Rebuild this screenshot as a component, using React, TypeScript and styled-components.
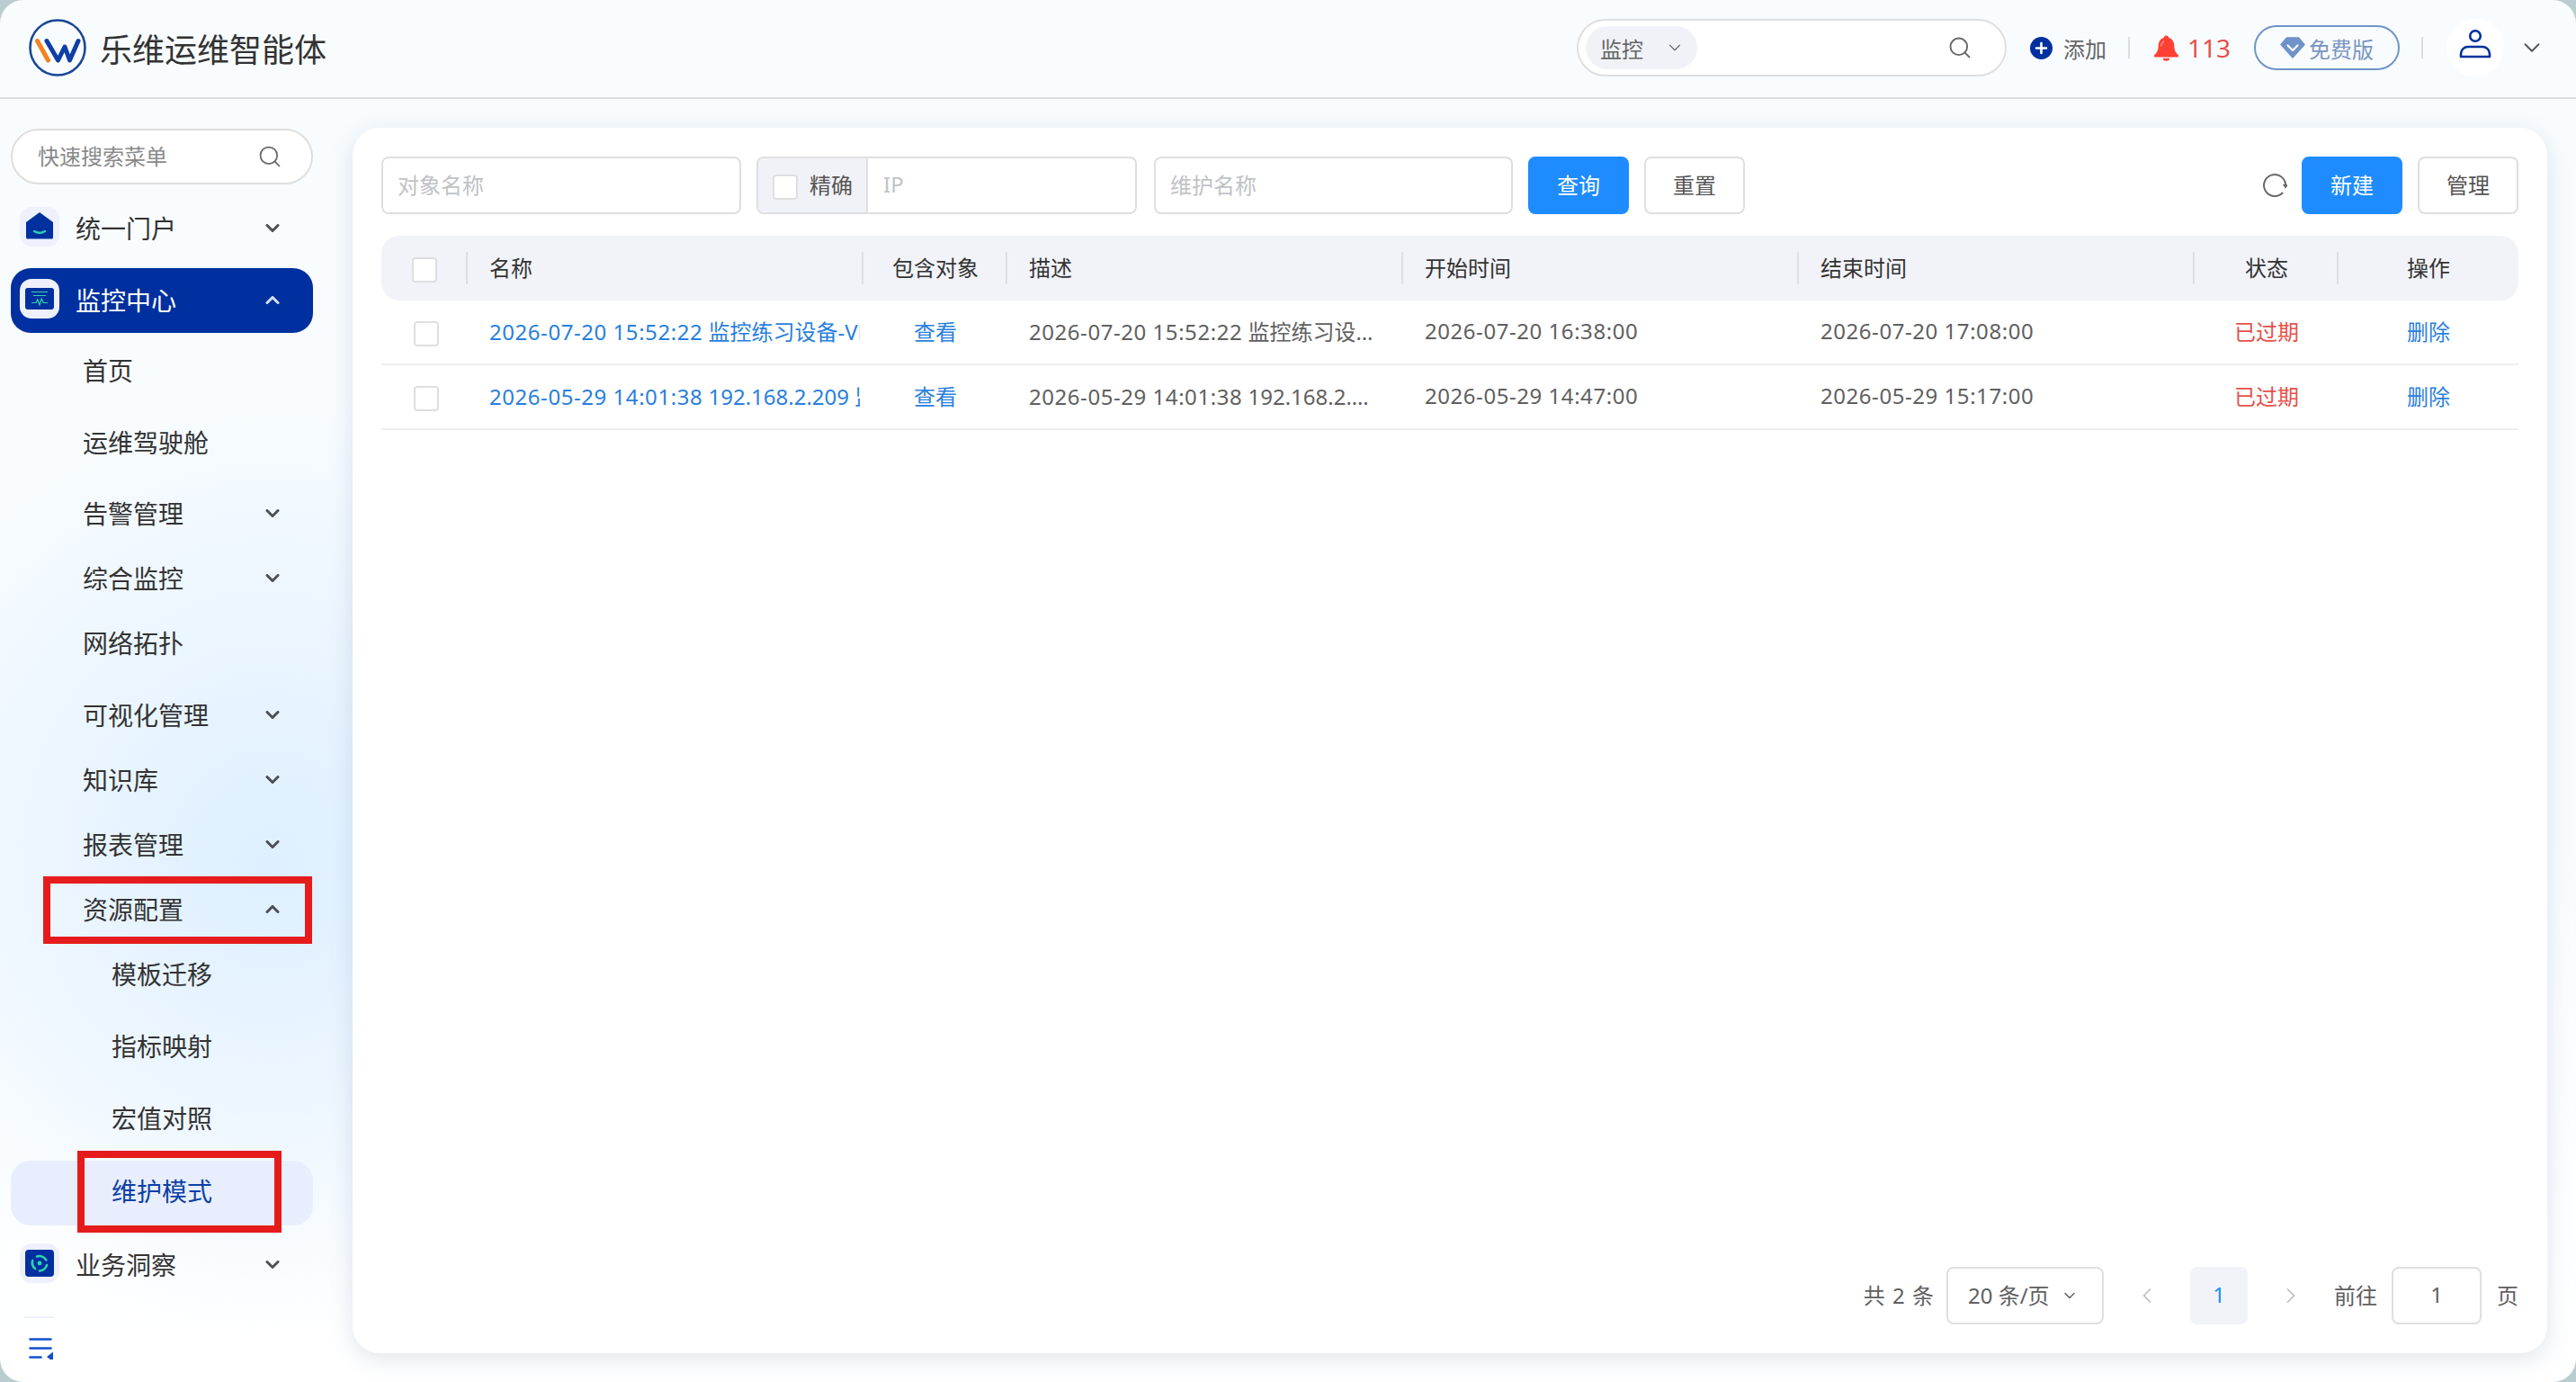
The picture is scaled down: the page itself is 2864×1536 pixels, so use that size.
import { FC, ReactNode } from 'react';
import styled, { createGlobalStyle } from 'styled-components';
import { ChevronDown, ChevronLeft, ChevronRight, Search } from 'lucide-react';

const NAVY = '#00309f';
const TEAL = '#2fd3b0';
const BLUE = '#1e8cff';

const GlobalStyle = createGlobalStyle`
  html, body {
    margin: 0;
    padding: 0;
    background: #b9cdd0;
  }
  * {
    box-sizing: border-box;
  }
  body {
    font-family: 'Noto Sans', 'Noto Sans CJK SC', sans-serif;
    font-size: 24px;
    color: #333;
  }
`;

const PortalIcon = () => (
  <svg width="44" height="44" viewBox="0 0 44 44">
    <path d="M7 17 22 6l15 11v17a1.500 1.500 0 0 1-1.500 1.500h-27A1.500 1.500 0 0 1 7 34z" fill={NAVY} />
    <path d="M16 27q6 3.500 12 0" fill="none" stroke={TEAL} strokeWidth="2.400" strokeLinecap="round" />
  </svg>
);

const MonitorIcon = () => (
  <svg width="44" height="44" viewBox="0 0 44 44">
    <rect x="6" y="10" width="32" height="24" rx="3" fill={NAVY} />
    <path d="M13 14.500h18M15 18.500h14" stroke={TEAL} strokeWidth="1.200" />
    <path d="M13 26.500h5l1.800-3.500 2.200 6 2.200-7 2 4.500h5" fill="none" stroke={TEAL} strokeWidth="1.200" />
  </svg>
);

const InsightIcon = () => (
  <svg width="44" height="44" viewBox="0 0 44 44">
    <rect x="6" y="7" width="32" height="30" rx="4" fill={NAVY} />
    <circle cx="22" cy="22" r="2.400" fill={TEAL} />
    <path
      d="M17 28a8.500 8.500 0 0 1-2.800-9M19 14.500a8.500 8.500 0 0 1 10.300 4M30 24a8.500 8.500 0 0 1-8 6.500"
      fill="none"
      stroke={TEAL}
      strokeWidth="2.600"
      strokeLinecap="round"
    />
  </svg>
);

const RefreshIcon = () => (
  <svg width="28" height="28" viewBox="0 0 28 28">
    <path d="M22.500 22.500A12 12 0 1 1 26 13" fill="none" stroke="#666" strokeWidth="2" strokeLinecap="round" />
    <path d="M22.800 13h6.400L26 17.500z" fill="#666" />
  </svg>
);

interface IMenuItem {
  label: string;
  level: 1 | 2 | 3;
  icon?: ReactNode;
  arrow?: 'up' | 'down';
  active?: boolean;
  selected?: boolean;
  mark?: 'section' | 'leaf';
  after?: number;
}

const menu: IMenuItem[] = [
  { label: '统一门户', level: 1, icon: <PortalIcon />, arrow: 'down', after: 8 },
  { label: '监控中心', level: 1, icon: <MonitorIcon />, arrow: 'up', active: true, after: 6 },
  { label: '首页', level: 2, after: 8 },
  { label: '运维驾驶舱', level: 2, after: 7 },
  { label: '告警管理', level: 2, arrow: 'down' },
  { label: '综合监控', level: 2, arrow: 'down' },
  { label: '网络拓扑', level: 2, after: 8 },
  { label: '可视化管理', level: 2, arrow: 'down' },
  { label: '知识库', level: 2, arrow: 'down' },
  { label: '报表管理', level: 2, arrow: 'down' },
  { label: '资源配置', level: 2, arrow: 'up', mark: 'section' },
  { label: '模板迁移', level: 3, after: 8 },
  { label: '指标映射', level: 3, after: 8 },
  { label: '宏值对照', level: 3, after: 11 },
  { label: '维护模式', level: 3, selected: true, mark: 'leaf', after: 8 },
  { label: '业务洞察', level: 1, icon: <InsightIcon />, arrow: 'down' },
];

const records = [
  {
    stamp: '2026-07-20 15:52:22',
    title: ' 监控练习设备-VMware',
    start: '2026-07-20 16:38:00',
    end: '2026-07-20 17:08:00',
  },
  {
    stamp: '2026-05-29 14:01:38',
    title: ' 192.168.2.209 监控练习设备',
    start: '2026-05-29 14:47:00',
    end: '2026-05-29 15:17:00',
  },
];

const Caret: FC<{ dir: 'up' | 'down' }> = ({ dir }) => (
  <svg width="16" height="11" viewBox="0 0 16 11">
    <path
      d={dir === 'down' ? 'M2 2.500 8 8.500l6-6' : 'M2 8.500 8 2.500l6 6'}
      fill="none"
      stroke="currentColor"
      strokeWidth="3"
      strokeLinecap="round"
      strokeLinejoin="round"
    />
  </svg>
);

const App = () => {
  return (
    <>
      <GlobalStyle />
      <Frame>
        <Header>
          <Logo viewBox="0 0 64 64" width="64" height="64">
            <circle cx="32" cy="32" r="30.500" fill="none" stroke="#1b4694" strokeWidth="2.600" />
            <path d="M9.500 24.500 21.500 46" fill="none" stroke="#f58220" strokeWidth="5" strokeLinecap="round" />
            <path
              d="M20 24.500 32.500 46 40 31l5.500 15L55 24.500"
              fill="none"
              stroke="#0d3fa6"
              strokeWidth="5"
              strokeLinecap="round"
              strokeLinejoin="round"
            />
          </Logo>
          <BrandName>乐维运维智能体</BrandName>

          <GlobalSearch>
            <ScopeSelect>
              监控
              <ChevronDown size={22} strokeWidth={1.2} />
            </ScopeSelect>
            <Search size={28} strokeWidth={1.6} color="#666" />
          </GlobalSearch>

          <AddLink>
            <svg width="25" height="25" viewBox="0 0 25 25">
              <circle cx="12.500" cy="12.500" r="12.500" fill={NAVY} />
              <path d="M12.500 7v11M7 12.500h11" stroke="#fff" strokeWidth="2.600" strokeLinecap="round" />
            </svg>
            添加
          </AddLink>
          <HeadDivider />
          <AlarmCount>
            <svg width="29" height="29" viewBox="0 0 29 29">
              <path
                d="M14.500 0.500c1.600 0 2.600 1 2.800 2.400 4.200 1.200 6 4.800 6 9.100 0 4.400 1.400 7.400 4.300 9.900 1 .9.500 2.600-1 2.600H2.400c-1.500 0-2-1.700-1-2.600 2.900-2.500 4.300-5.500 4.300-9.900 0-4.300 1.800-7.900 6-9.100.2-1.400 1.200-2.400 2.800-2.400z"
                fill="#ff4033"
              />
              <path d="M10.800 25.800h7.400a3.700 3 0 0 1-7.400 0z" fill="#ff4033" />
              <path d="M8.800 12c.2-2.400 1.200-4 3-4.900" fill="none" stroke="#ff8f86" strokeWidth="1.400" strokeLinecap="round" />
            </svg>
            113
          </AlarmCount>
          <PlanBadge>
            <svg width="28" height="24" viewBox="0 0 28 24">
              <path d="M7.500 1h13L27 8.500 14 23 1 8.500z" fill="#6f93c9" stroke="#6f93c9" strokeWidth="1.500" strokeLinejoin="round" />
              <path d="M8.500 9.500 14 15l5.500-5.500" fill="none" stroke="#fff" strokeWidth="2.200" strokeLinecap="round" strokeLinejoin="round" />
            </svg>
            免费版
          </PlanBadge>
          <HeadDivider />
          <Avatar>
            <svg width="36" height="32" viewBox="0 0 36 32">
              <circle cx="18" cy="7" r="5.800" fill="none" stroke={NAVY} strokeWidth="2.600" />
              <path d="M2 30v-3c0-5 4-8 8-8h16c4 0 8 3 8 8v3z" fill="none" stroke={NAVY} strokeWidth="2.600" strokeLinejoin="round" />
            </svg>
          </Avatar>
          <UserCaret>
            <ChevronDown size={30} strokeWidth={1.5} />
          </UserCaret>
        </Header>

        <Body>
          <Sidebar>
            <MenuSearch>
              <span>快速搜索菜单</span>
              <Search size={28} strokeWidth={1.5} color="#666" />
            </MenuSearch>
            <Menu>
              {menu.map((item) => (
                <MenuRow
                  key={item.label}
                  $level={item.level}
                  $active={item.active}
                  $selected={item.selected}
                  $after={item.after ?? 0}
                >
                  {item.icon && <IconTile>{item.icon}</IconTile>}
                  {item.label}
                  {item.arrow && (
                    <RowCaret>
                      <Caret dir={item.arrow} />
                    </RowCaret>
                  )}
                  {item.mark === 'section' && <SectionMark />}
                  {item.mark === 'leaf' && <LeafMark />}
                </MenuRow>
              ))}
            </Menu>
            <SideFooter>
              <svg width="28" height="24" viewBox="0 0 28 24">
                <path d="M1.500 1.500h23M1.500 11.500h23M1.500 21.500h12" stroke="#1050cc" strokeWidth="2.600" strokeLinecap="round" />
                <path d="M27 16v11l-7-5.500z" fill="#1050cc" transform="translate(0 -0.500)" />
              </svg>
            </SideFooter>
          </Sidebar>

          <Card>
            <Toolbar>
              <TextField $width={400}>对象名称</TextField>
              <IpField>
                <ExactToggle>
                  <Tick />
                  精确
                </ExactToggle>
                <IpInput>IP</IpInput>
              </IpField>
              <TextField $width={399} $shift={2}>
                维护名称
              </TextField>
              <ActionButton $primary>查询</ActionButton>
              <ActionButton>重置</ActionButton>
              <ToolbarRight>
                <RefreshIcon />
                <ActionButton $primary>新建</ActionButton>
                <ActionButton>管理</ActionButton>
              </ToolbarRight>
            </Toolbar>

            <TableHead>
              <HeadCell $center>
                <Tick />
              </HeadCell>
              <HeadCell>名称</HeadCell>
              <HeadCell $center>包含对象</HeadCell>
              <HeadCell>描述</HeadCell>
              <HeadCell>开始时间</HeadCell>
              <HeadCell>结束时间</HeadCell>
              <HeadCell $center>状态</HeadCell>
              <HeadCell $center $last>
                操作
              </HeadCell>
            </TableHead>

            {records.map((r) => (
              <TableRow key={r.stamp}>
                <BodyCell $center>
                  <RowTick />
                </BodyCell>
                <BodyCell>
                  <NameClip>
                    <Stamp>{r.stamp}</Stamp>
                    {r.title}
                  </NameClip>
                </BodyCell>
                <BodyCell $center>
                  <LinkText>查看</LinkText>
                </BodyCell>
                <BodyCell>
                  <Clamp>
                    <Stamp>{r.stamp}</Stamp>
                    {r.title}
                  </Clamp>
                </BodyCell>
                <BodyCell>
                  <Stamp>{r.start}</Stamp>
                </BodyCell>
                <BodyCell>
                  <Stamp>{r.end}</Stamp>
                </BodyCell>
                <BodyCell $center>
                  <Expired>已过期</Expired>
                </BodyCell>
                <BodyCell $center>
                  <LinkText>删除</LinkText>
                </BodyCell>
              </TableRow>
            ))}

            <Pager>
              <PagerText>共 2 条</PagerText>
              <PageSize>
                <span>20 条/页</span>
                <ChevronDown size={20} strokeWidth={1.8} />
              </PageSize>
              <PagerArrow>
                <ChevronLeft size={28} strokeWidth={1.5} />
              </PagerArrow>
              <PageNumber>1</PageNumber>
              <PagerArrow>
                <ChevronRight size={28} strokeWidth={1.5} />
              </PagerArrow>
              <PagerText>前往</PagerText>
              <JumpInput>1</JumpInput>
              <PagerText>页</PagerText>
            </Pager>
          </Card>
        </Body>
      </Frame>
    </>
  );
};

export default App;

const Frame = styled.div`
  width: 2864px;
  height: 1536px;
  border-radius: 26px;
  overflow: hidden;
  display: flex;
  flex-direction: column;
  background:
    radial-gradient(ellipse 480px 520px at 300px 960px, #deefff 0%, rgba(222, 239, 255, 0) 100%),
    linear-gradient(180deg, #f8fcff 0%, #f8fcff 60%, #ffffff 100%);
`;

const Header = styled.header`
  height: 110px;
  flex: none;
  display: flex;
  align-items: center;
  padding: 0 34px 2px 32px;
  border-bottom: 2px solid #dcdee2;
`;

const Logo = styled.svg`
  flex: none;
`;

const BrandName = styled.div`
  margin-left: 15px;
  font-size: 36px;
  color: #333;
  white-space: nowrap;
`;

const GlobalSearch = styled.div`
  margin-left: auto;
  width: 478px;
  height: 64px;
  border: 2px solid #dfdfe2;
  border-radius: 32px;
  background: #fff;
  display: flex;
  align-items: center;
  justify-content: space-between;
  padding: 0 36px 0 8px;
`;

const ScopeSelect = styled.div`
  width: 124px;
  height: 48px;
  border-radius: 24px;
  background: #f1f2f7;
  color: #666;
  display: flex;
  align-items: center;
  justify-content: space-between;
  padding: 0 14px 0 16px;
`;

const AddLink = styled.div`
  margin-left: 26px;
  display: flex;
  align-items: center;
  gap: 12px;
  color: #666;
`;

const HeadDivider = styled.i`
  width: 2px;
  height: 24px;
  margin: 0 26px 0 24px;
  background: #dcdee2;
`;

const AlarmCount = styled.div`
  display: flex;
  align-items: center;
  gap: 9px;
  font-size: 28px;
  color: #e6504a;
`;

const PlanBadge = styled.div`
  margin-left: 26px;
  width: 162px;
  height: 50px;
  border: 2px solid #7094c8;
  border-radius: 25px;
  display: flex;
  align-items: center;
  justify-content: center;
  gap: 4px;
  color: #7a94c0;
`;

const Avatar = styled.div`
  width: 64px;
  height: 64px;
  border-radius: 50%;
  background: #fff;
  display: flex;
  align-items: center;
  justify-content: center;
  padding-bottom: 8px;
`;

const UserCaret = styled.div`
  margin-left: 16px;
  color: #555;
  display: flex;
`;

const Body = styled.div`
  flex: 1;
  min-height: 0;
  display: flex;
`;

const Sidebar = styled.aside`
  width: 392px;
  flex: none;
  padding: 33px 44px 0 12px;
  display: flex;
  flex-direction: column;
`;

const MenuSearch = styled.div`
  height: 62px;
  flex: none;
  border: 2px solid #dedede;
  border-radius: 31px;
  background: #fff;
  display: flex;
  align-items: center;
  justify-content: space-between;
  padding: 0 32px 0 28px;
  color: #8a8a8a;

  span {
    padding-bottom: 3px;
  }
`;

const Menu = styled.nav`
  margin-top: 13px;
  display: flex;
  flex-direction: column;
`;

const levelPadding = { 1: 10, 2: 80, 3: 112 };

const MenuRow = styled.div<{ $level: 1 | 2 | 3; $active?: boolean; $selected?: boolean; $after: number }>`
  position: relative;
  height: 72px;
  flex: none;
  display: flex;
  align-items: center;
  padding-left: ${(p) => levelPadding[p.$level]}px;
  padding-bottom: ${(p) => (p.$selected ? 7 : 3)}px;
  margin-bottom: ${(p) => p.$after}px;
  border-radius: 22px;
  font-size: 28px;
  color: ${(p) => (p.$active ? '#fff' : p.$selected ? '#0d3fa6' : '#333')};
  background: ${(p) => (p.$active ? NAVY : p.$selected ? '#e8eefd' : 'transparent')};
`;

const IconTile = styled.span`
  width: 44px;
  height: 44px;
  margin: -1px 18px 0 0;
  border-radius: 13px;
  background: #eef1fc;
  display: flex;
`;

const RowCaret = styled.span`
  margin-left: auto;
  margin-right: 37px;
  margin-top: 1px;
  display: flex;
  color: inherit;
  opacity: 0.85;
`;

const SectionMark = styled.i`
  position: absolute;
  left: 36px;
  top: -1px;
  width: 299px;
  height: 75px;
  border: 8px solid #e61c1c;
`;

const LeafMark = styled.i`
  position: absolute;
  left: 74px;
  top: -11px;
  width: 227px;
  height: 91px;
  border: 8px solid #e61c1c;
`;

const SideFooter = styled.div`
  position: relative;
  display: flex;
  margin-top: 21px;
  padding: 24px 0 0 20px;

  &::before {
    content: '';
    position: absolute;
    left: 15px;
    top: 0;
    width: 33px;
    height: 2px;
    background: #edf1fb;
  }
`;

const Card = styled.main`
  width: 2440px;
  height: 1362px;
  margin-top: 32px;
  padding: 32px;
  border-radius: 30px;
  background: #fff;
  box-shadow: 0 6px 26px rgba(100, 125, 155, 0.2);
  display: flex;
  flex-direction: column;
`;

const Toolbar = styled.div`
  height: 64px;
  flex: none;
  display: flex;
  gap: 17px;
`;

const TextField = styled.div<{ $width: number; $shift?: number }>`
  width: ${(p) => p.$width}px;
  margin-left: ${(p) => p.$shift ?? 0}px;
  border: 2px solid #dfdfe2;
  border-radius: 8px;
  display: flex;
  align-items: center;
  padding: 0 0 3px 16px;
  color: #c0c2c6;
`;

const IpField = styled.div`
  width: 423px;
  border: 2px solid #dfdfe2;
  border-radius: 8px;
  display: flex;
  overflow: hidden;
`;

const ExactToggle = styled.div`
  width: 122px;
  flex: none;
  background: #f1f2f7;
  border-right: 2px solid #dfdfe2;
  display: flex;
  align-items: center;
  gap: 13px;
  padding: 0 0 3px 16px;
  color: #555;
`;

const IpInput = styled.div`
  flex: 1;
  display: flex;
  align-items: center;
  padding: 0 0 3px 17px;
  color: #c0c2c6;
`;

const Tick = styled.span`
  width: 28px;
  height: 28px;
  flex: none;
  margin-top: 6px;
  border: 2px solid #dfdfe2;
  border-radius: 4px;
  background: #fff;
`;

const RowTick = styled(Tick)`
  margin-left: 4px;
`;

const ActionButton = styled.div<{ $primary?: boolean }>`
  width: 112px;
  flex: none;
  padding-bottom: 3px;
  border-radius: 8px;
  border: 2px solid ${(p) => (p.$primary ? BLUE : '#dfdfe2')};
  background: ${(p) => (p.$primary ? BLUE : '#fff')};
  color: ${(p) => (p.$primary ? '#fff' : '#555')};
  display: flex;
  align-items: center;
  justify-content: center;
`;

const ToolbarRight = styled.div`
  margin-left: auto;
  display: flex;
  align-items: center;
  height: 100%;
  gap: 17px;

  & > svg {
    margin-right: -1px;
  }

  & > div {
    height: 100%;
  }
`;

const columns = '96px 440px 160px 440px 440px 440px 160px 200px';

const TableHead = styled.div`
  margin-top: 24px;
  height: 72px;
  flex: none;
  display: grid;
  grid-template-columns: ${columns};
  border-radius: 20px;
  background: #f1f3f8;
  color: #333;
`;

const HeadCell = styled.div<{ $center?: boolean; $last?: boolean }>`
  position: relative;
  display: flex;
  align-items: center;
  justify-content: ${(p) => (p.$center ? 'center' : 'flex-start')};
  padding: 0 0 3px ${(p) => (p.$center ? 0 : 24)}px;

  &::after {
    content: '';
    display: ${(p) => (p.$last ? 'none' : 'block')};
    position: absolute;
    right: 0;
    top: 18px;
    width: 2px;
    height: 36px;
    background: #dcdfe5;
  }
`;

const TableRow = styled.div`
  height: 72px;
  flex: none;
  display: grid;
  grid-template-columns: ${columns};
  border-bottom: 2px solid #eeeff2;
  color: #606060;
`;

const BodyCell = styled.div<{ $center?: boolean }>`
  min-width: 0;
  display: flex;
  align-items: center;
  justify-content: ${(p) => (p.$center ? 'center' : 'flex-start')};
  padding: 0 ${(p) => (p.$center ? 0 : 24)}px 3px;
`;

const NameClip = styled.div`
  width: 412px;
  flex: none;
  overflow: hidden;
  white-space: nowrap;
  color: #2a7fdc;
`;

const Clamp = styled.div`
  max-width: 388px;
  overflow: hidden;
  white-space: nowrap;
  text-overflow: ellipsis;
`;

const Stamp = styled.span`
  letter-spacing: 0.55px;
`;

const LinkText = styled.span`
  color: #2a7fdc;
`;

const Expired = styled.span`
  color: #e6504a;
`;

const Pager = styled.div`
  margin-top: auto;
  height: 64px;
  flex: none;
  display: flex;
  align-items: center;
  justify-content: flex-end;
  color: #606060;
`;

const PagerText = styled.span`
  word-spacing: 2px;
  padding-bottom: 3px;
`;

const PageSize = styled.div`
  width: 175px;
  height: 64px;
  margin-left: 14px;
  border: 2px solid #dfdfe2;
  border-radius: 8px;
  display: flex;
  align-items: center;
  justify-content: space-between;
  padding: 0 26px 0 22px;

  span {
    padding-bottom: 3px;
  }
`;

const PagerArrow = styled.span`
  display: flex;
  color: #bdbdbd;
  margin: 0 34px;
`;

const PageNumber = styled.div`
  width: 64px;
  height: 64px;
  padding-bottom: 3px;
  border-radius: 8px;
  background: #f1f3f8;
  color: ${BLUE};
  display: flex;
  align-items: center;
  justify-content: center;
`;

const JumpInput = styled.div`
  width: 100px;
  height: 64px;
  margin: 0 17px 0 16px;
  padding-bottom: 3px;
  border: 2px solid #dfdfe2;
  border-radius: 8px;
  display: flex;
  align-items: center;
  justify-content: center;
`;
